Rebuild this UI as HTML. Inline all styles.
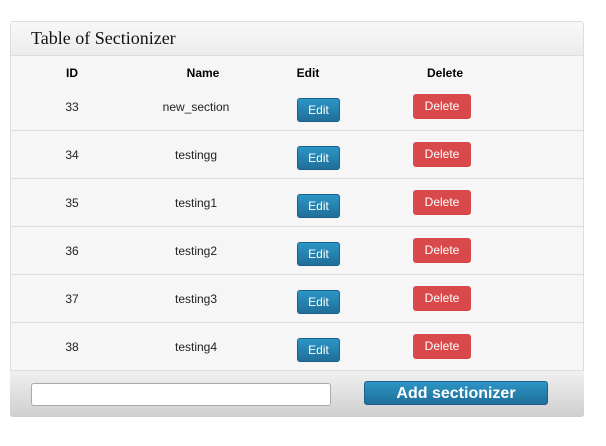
<!DOCTYPE html>
<html><head><style>
body{margin:0;width:606px;height:446px;background:#fff;font-family:"Liberation Sans",sans-serif;position:relative;overflow:hidden}
.p{position:absolute;left:10px;top:21px;width:574px;height:396px;border:1px solid #ddd;border-radius:3px;background:#f6f6f6;box-sizing:border-box}
.h{position:absolute;left:0;top:0;width:100%;height:33px;background:linear-gradient(#f8f8f8,#ececec);border-bottom:1px solid #ddd}
.h span{position:absolute;left:20px;top:6px;font-family:"Liberation Serif",serif;font-size:18px;color:#111}
.a{position:absolute;font-size:12px;color:#222;transform:translateX(-50%);white-space:nowrap}
.b{font-weight:bold;color:#000}
.l{position:absolute;left:10px;width:574px;height:1px;background:#ddd}
.e{position:absolute;left:297px;width:43px;height:24px;border-radius:3px;background:linear-gradient(#2d95c5,#1f6f9a);border:1px solid #1b6187;box-sizing:border-box;color:#fff;font-size:12px;text-align:center;line-height:22px}
.d{position:absolute;left:413px;width:58px;height:25px;border-radius:3px;background:#d9494a;color:#fff;font-size:12px;text-align:center;line-height:24px}
.f{position:absolute;left:10px;top:371px;width:574px;height:46px;background:linear-gradient(#f0f0f0,#cfcfcf);border-radius:0 0 3px 3px}
</style></head><body>
<div class="p"><div class="h"><span>Table of Sectionizer</span></div></div>
<div class="a b" style="left:72px;top:66px">ID</div>
<div class="a b" style="left:203px;top:66px">Name</div>
<div class="a b" style="left:308px;top:66px">Edit</div>
<div class="a b" style="left:445px;top:66px">Delete</div>

<div class="a" style="left:72px;top:100px">33</div><div class="a" style="left:196px;top:100px">new_section</div>
<div class="e" style="top:98px">Edit</div><div class="d" style="top:94px">Delete</div><div class="l" style="top:130px"></div>
<div class="a" style="left:72px;top:148px">34</div><div class="a" style="left:196px;top:148px">testingg</div>
<div class="e" style="top:146px">Edit</div><div class="d" style="top:142px">Delete</div><div class="l" style="top:178px"></div>
<div class="a" style="left:72px;top:196px">35</div><div class="a" style="left:196px;top:196px">testing1</div>
<div class="e" style="top:194px">Edit</div><div class="d" style="top:190px">Delete</div><div class="l" style="top:226px"></div>
<div class="a" style="left:72px;top:244px">36</div><div class="a" style="left:196px;top:244px">testing2</div>
<div class="e" style="top:242px">Edit</div><div class="d" style="top:238px">Delete</div><div class="l" style="top:274px"></div>
<div class="a" style="left:72px;top:292px">37</div><div class="a" style="left:196px;top:292px">testing3</div>
<div class="e" style="top:290px">Edit</div><div class="d" style="top:286px">Delete</div><div class="l" style="top:322px"></div>
<div class="a" style="left:72px;top:340px">38</div><div class="a" style="left:196px;top:340px">testing4</div>
<div class="e" style="top:338px">Edit</div><div class="d" style="top:334px">Delete</div>
<div class="f"></div><div class="l" style="top:370px"></div>
<div style="position:absolute;left:31px;top:383px;width:300px;height:23px;background:#fff;border:1px solid #aaa;border-radius:3px;box-sizing:border-box"></div>
<div style="position:absolute;left:364px;top:381px;width:184px;height:24px;background:linear-gradient(#2d95c5,#1f6f9a);border:1px solid #1b6187;box-sizing:border-box;border-radius:3px;color:#fff;font-weight:bold;font-size:16px;text-align:center;line-height:23px">Add sectionizer</div>
</body></html>
